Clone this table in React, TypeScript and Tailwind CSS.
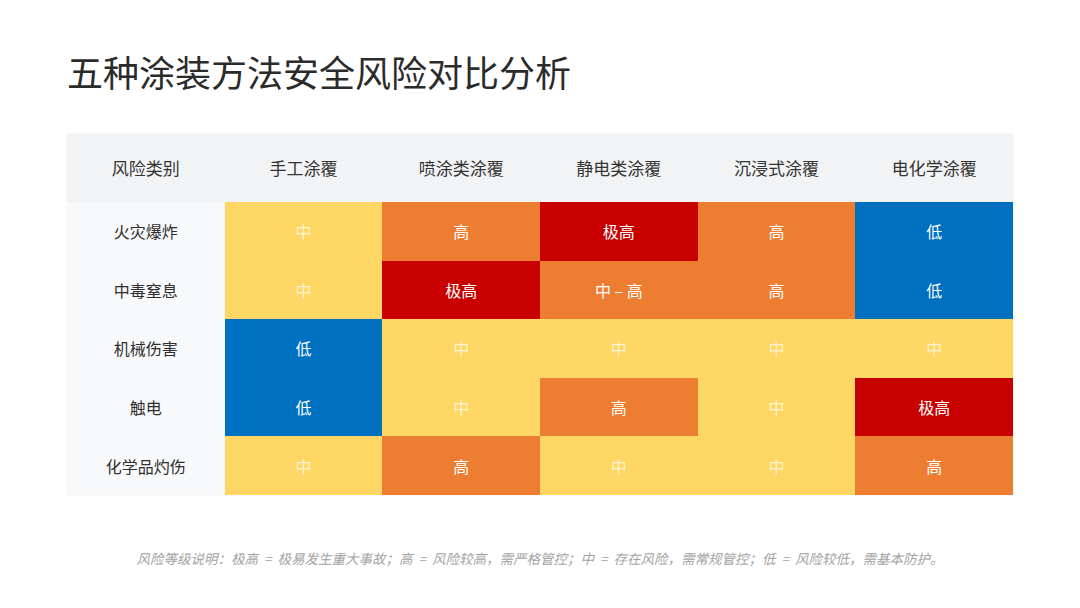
import React from 'react'

type Level = '低' | '中' | '中 – 高' | '高' | '极高'

const methods = ['手工涂覆', '喷涂类涂覆', '静电类涂覆', '沉浸式涂覆', '电化学涂覆']

const rows: { risk: string; levels: Level[] }[] = [
  { risk: '火灾爆炸', levels: ['中', '高', '极高', '高', '低'] },
  { risk: '中毒窒息', levels: ['中', '极高', '中 – 高', '高', '低'] },
  { risk: '机械伤害', levels: ['低', '中', '中', '中', '中'] },
  { risk: '触电', levels: ['低', '中', '高', '中', '极高'] },
  { risk: '化学品灼伤', levels: ['中', '高', '中', '中', '高'] },
]

// cell fill per level; 中 – 高 reads as the orange band in the source
const fill: Record<Level, string> = {
  低: 'bg-[#0070c0]',
  中: 'bg-[#fdd663]',
  '中 – 高': 'bg-[#ed7d31]',
  高: 'bg-[#ed7d31]',
  极高: 'bg-[#c80000]',
}

const font = { fontFamily: '"Noto Sans CJK SC", "Noto Sans", sans-serif' }

export default function App() {
  return (
    <div className="flex h-[608px] w-[1080px] flex-col bg-white px-[67px]" style={font}>
      <h1 className="pt-[47px] text-[36px] leading-[48px] font-normal text-[#2b2b2b]">
        五种涂装方法安全风险对比分析
      </h1>

      <div className="mt-[39px] grid h-[361px] grid-cols-6 grid-rows-[68px_repeat(5,1fr)] shadow-[0_0_2px_rgba(0,0,0,0.08)]">
        <div className="flex items-center justify-center bg-[#f2f3f5] text-[17px] text-[#333]">风险类别</div>
        {methods.map((m) => (
          <div key={m} className="flex items-center justify-center bg-[#f2f3f5] text-[17px] text-[#333]">
            {m}
          </div>
        ))}

        {rows.map((r) => (
          <React.Fragment key={r.risk}>
            <div className="flex items-center justify-center bg-[#f8f9fb] text-[16px] text-[#2f2f2f]">
              {r.risk}
            </div>
            {r.levels.map((lv, i) => (
              <div
                key={i}
                className={`flex items-center justify-center text-[16px] ${fill[lv]} ${
                  lv === '中' ? 'text-[#fff3cf]' : 'text-white'
                }`}
              >
                {lv}
              </div>
            ))}
          </React.Fragment>
        ))}
      </div>

      <p className="mt-[54px] text-center text-[13.5px] leading-[18px] italic tracking-[0px] [word-spacing:3px] text-[#a3a3a3]">
        风险等级说明：极高 = 极易发生重大事故；高 = 风险较高，需严格管控；中 = 存在风险，需常规管控；低 = 风险较低，需基本防护。
      </p>
    </div>
  )
}
